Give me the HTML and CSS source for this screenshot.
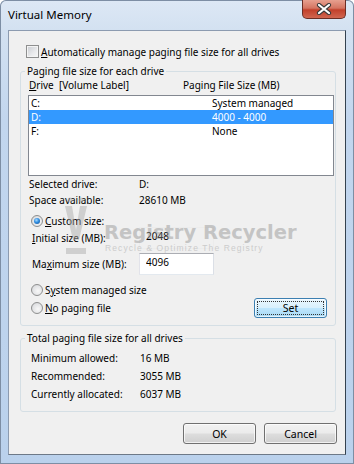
FILE: index.html
```html
<!DOCTYPE html>
<html>
<head>
    <title>Virtual Memory</title>
    <link rel="stylesheet" href="styles.css">
</head>
<body>
    <div class="window">
        <div class="titlebar">
            <span class="title">Virtual Memory</span>
            <button class="close-btn" title="Close">
                <svg width="16" height="12" viewBox="0 0 16 12">
                    <path d="M3 2 L13 10 M13 2 L3 10" stroke="#3a3a3a" stroke-width="4.2" stroke-linecap="round"/>
                    <path d="M3 2 L13 10 M13 2 L3 10" stroke="#fff" stroke-width="2.2" stroke-linecap="round"/>
                </svg>
            </button>
        </div>

        <div class="client">
            <label class="check-row"><span class="checkbox"></span><span><u>A</u>utomatically manage paging file size for all drives</span></label>

            <fieldset class="group group-drives">
                <legend>Paging file size for each drive</legend>
                <div class="list-header">
                    <span><u>D</u>rive&nbsp;&nbsp;[Volume Label]</span>
                    <span>Paging File Size (MB)</span>
                </div>
                <div class="listbox">
                    <div class="list-row"><span>C:</span><span>System managed</span></div>
                    <div class="list-row selected"><span>D:</span><span>4000 - 4000</span></div>
                    <div class="list-row"><span>F:</span><span>None</span></div>
                </div>

                <div class="info-row"><span class="info-label">Selected drive:</span><span>D:</span></div>
                <div class="info-row"><span class="info-label">Space available:</span><span>28610 MB</span></div>

                <div class="radio-row first"><span class="radio checked"></span><span><u>C</u>ustom size:</span></div>
                <div class="field-row">
                    <span class="field-label"><u>I</u>nitial size (MB):</span>
                    <input class="textbox muted" type="text" value="2048">
                </div>
                <div class="field-row second">
                    <span class="field-label">Ma<u>x</u>imum size (MB):</span>
                    <input class="textbox" type="text" value="4096">
                </div>
                <div class="radio-row system"><span class="radio"></span><span>S<u>y</u>stem managed size</span></div>
                <div class="radio-row last">
                    <span class="radio"></span><span><u>N</u>o paging file</span>
                    <button class="btn btn-default">Set</button>
                </div>
            </fieldset>

            <fieldset class="group group-total">
                <legend>Total paging file size for all drives</legend>
                <div class="total-row"><span class="total-label">Minimum allowed:</span><span>16 MB</span></div>
                <div class="total-row"><span class="total-label">Recommended:</span><span>3055 MB</span></div>
                <div class="total-row"><span class="total-label">Currently allocated:</span><span>6037 MB</span></div>
            </fieldset>

            <div class="dialog-buttons">
                <button class="btn">OK</button>
                <button class="btn">Cancel</button>
            </div>
        </div>

        <!-- watermark laid over the dialog -->
        <div class="watermark">
            <svg class="wm-logo" width="24" height="62" viewBox="0 0 24 62">
                <circle cx="6" cy="4" r="2.5" fill="#a8a8a8"/>
                <circle cx="17" cy="4" r="2.5" fill="#a8a8a8"/>
                <path d="M1 10 L8 10 L12 34 L16 10 L23 10 L15 44 L9 44 Z" fill="#a8a8a8"/>
                <rect x="2" y="52" width="20" height="6" fill="#a8a8a8"/>
            </svg>
            <div class="wm-text">
                <span class="wm-title">Registry Recycler</span>
                <span class="wm-sub">Recycle &amp; Optimize The Registry</span>
            </div>
        </div>
    </div>
</body>
</html>
```

FILE: styles.css
```css
* {
    box-sizing: border-box;
}

body {
    margin: 0;
    font-family: "Noto Sans", "Liberation Sans", sans-serif;
    font-size: 10px;
    color: #000;
}

u {
    text-decoration: underline;
    text-underline-offset: 1px;
}

.window {
    position: relative;
    width: 354px;
    height: 464px;
    padding: 0 8px 9px;
    background: linear-gradient(to bottom, #dde8f5 0, #d3e1f1 30px, #c2d6ee 120px, #bad1ec 100%);
    box-shadow: inset 0 0 0 1px #7d8ea4;
    border-radius: 6px 6px 0 0;
}

.titlebar {
    height: 30px;
    display: flex;
    align-items: flex-start;
}

.title {
    line-height: 30px;
    font-size: 11.5px;
    color: #000;
}

.close-btn {
    margin-left: auto;
    width: 44px;
    height: 19px;
    padding: 0;
    border: 1px solid #6b2e25;
    border-top: none;
    border-radius: 0 0 5px 5px;
    background: linear-gradient(to bottom, #e7a08f 0, #d57562 45%, #c2402b 55%, #d06650 100%);
    display: flex;
    align-items: center;
    justify-content: center;
}

.client {
    height: 425px;
    background: #f0f0f0;
    border: 1px solid;
    border-color: #8c9bb0 #34424f #6d7987 #8c9bb0;
}

/* checkbox row */
.check-row {
    display: flex;
    align-items: center;
    gap: 2px;
    height: 13px;
    margin-top: 14px;
    padding-left: 17px;
}

.checkbox {
    width: 13px;
    height: 13px;
    border: 1px solid #8e8f8f;
    background: linear-gradient(135deg, #c9ccd1 0, #e9eaec 60%, #f7f7f7 100%);
    box-shadow: inset 0 0 0 1px #f4f4f4;
}

/* group boxes */
.group {
    margin: 0 0 0 11px;
    width: 316px;
    min-width: 0;
    border: 1px solid #d5dfe5;
    border-radius: 3px;
    padding: 1px 1px 7px 7px;
}

.group legend {
    padding: 0 2px;
    margin-left: -3px;
    line-height: 14px;
    height: 14px;
}

.group-drives {
    margin-top: 6px;
}

.group-total {
    margin-top: 5px;
    padding-top: 4px;
    padding-bottom: 8px;
}

/* drive list */
.list-header {
    display: grid;
    grid-template-columns: 154px 1fr;
    height: 13px;
    line-height: 13px;
    padding-left: 1px;
}

.listbox {
    margin-top: 3px;
    width: 306px;
    height: 81px;
    background: #fff;
    border: 1px solid #828790;
}

.list-row {
    display: grid;
    grid-template-columns: 181px 1fr;
    height: 14px;
    line-height: 14px;
    padding-left: 2px;
}

.list-row.selected {
    background: #3399ff;
    color: #fff;
}

.info-row {
    display: grid;
    grid-template-columns: 110px 1fr;
    height: 16px;
    line-height: 16px;
    padding-left: 1px;
}

/* radios and edit fields */
.radio-row {
    display: flex;
    align-items: center;
    gap: 2px;
    height: 12px;
    padding-left: 3px;
}

.radio-row.first {
    margin-top: 7px;
}

.radio-row.system {
    margin-top: 9px;
}

.radio-row.last {
    margin-top: 2px;
    height: 20px;
}

.radio {
    width: 12px;
    height: 12px;
    border-radius: 50%;
    border: 1px solid #8e8f8f;
    background: radial-gradient(circle at 60% 60%, #f8f8f8 0, #e2e3e5 60%, #c9cbce 100%);
    position: relative;
}

.radio.checked::after {
    content: "";
    position: absolute;
    left: 2px;
    top: 2px;
    width: 6px;
    height: 6px;
    border-radius: 50%;
    background: radial-gradient(circle at 40% 35%, #a9dbff 0, #2f8de0 45%, #16498a 100%);
}

.field-row {
    display: grid;
    grid-template-columns: 107px 75px;
    align-items: center;
    height: 22px;
    padding-left: 4px;
}

.field-row.second {
    margin-top: 4px;
}

.textbox {
    width: 75px;
    height: 22px;
    margin: 0;
    padding: 0 0 5px 6px;
    font: inherit;
    color: #000;
    background: #fff;
    border: 1px solid;
    border-color: #abadb3 #dbdfe6 #e3e9ef #e2e3ea;
    outline: none;
}

.textbox.muted {
    background: transparent;
    border-color: #ececec;
}

/* buttons */
.btn {
    width: 73px;
    height: 21px;
    padding: 0;
    font: inherit;
    font-size: 10.5px;
    color: #000;
    border: 1px solid #707070;
    border-radius: 3px;
    background: linear-gradient(to bottom, #f2f2f2 0, #ebebeb 48%, #dddddd 52%, #cfcfcf 100%);
    box-shadow: inset 0 0 0 1px rgba(255,255,255,0.7);
}

.btn-default {
    margin-left: auto;
    margin-right: 7px;
    width: 73px;
    height: 20px;
    border-color: #3c7fb1;
    background: linear-gradient(to bottom, #eaf6fd 0, #d9f0fc 48%, #bee6fd 52%, #a7d9f5 100%);
    outline: 1px dotted #333;
    outline-offset: -4px;
}

.total-row {
    display: grid;
    grid-template-columns: 109px 1fr;
    height: 18px;
    line-height: 18px;
    padding-left: 3px;
}

.dialog-buttons {
    display: flex;
    justify-content: flex-end;
    gap: 8px;
    margin-top: 11px;
    padding-right: 8px;
}

/* watermark */
.watermark {
    position: absolute;
    left: 64px;
    top: 196px;
    display: flex;
    gap: 16px;
    opacity: 0.45;
    pointer-events: none;
}

.wm-text {
    display: flex;
    flex-direction: column;
    padding-top: 26px;
}

.wm-title {
    font-family: "DejaVu Sans", sans-serif;
    font-weight: bold;
    font-size: 19.5px;
    line-height: 21px;
    color: #8f8f8f;
}

.wm-sub {
    font-family: "Liberation Sans", sans-serif;
    font-size: 8.5px;
    letter-spacing: 1.1px;
    line-height: 11px;
    padding-left: 1px;
    color: #a0a0a0;
}
```
